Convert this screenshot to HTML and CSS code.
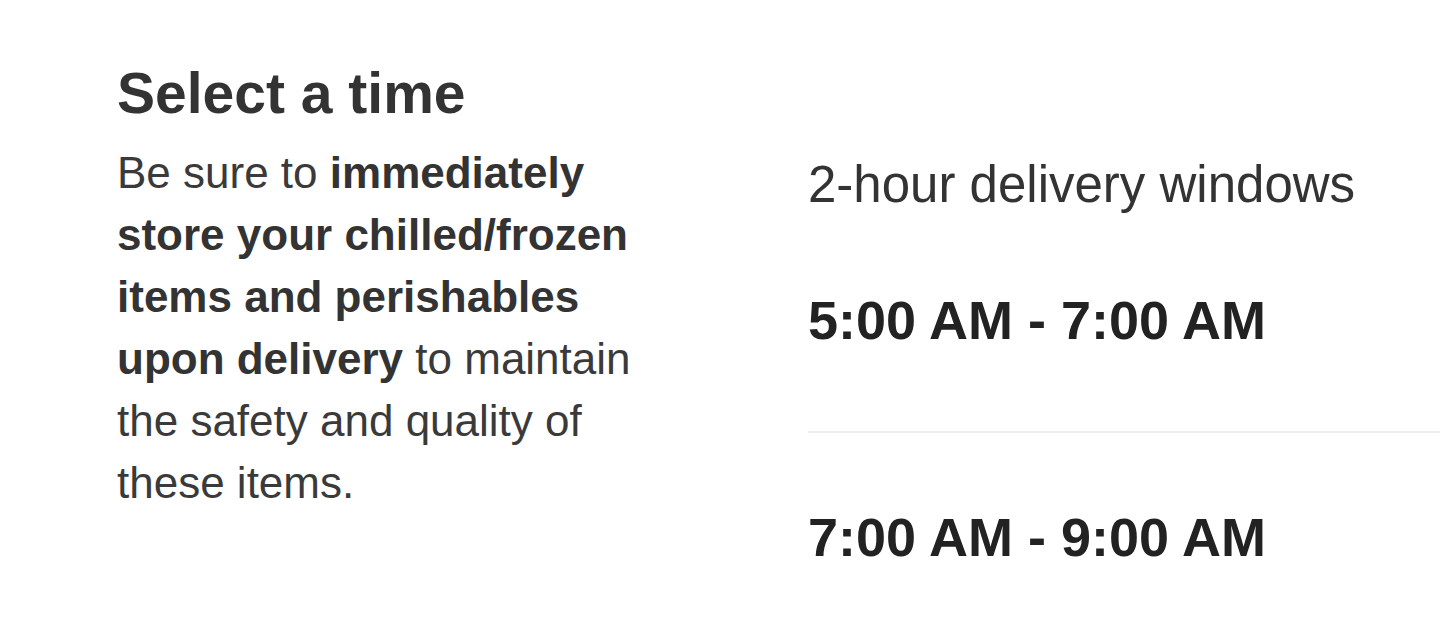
FILE: index.html
```html
<!DOCTYPE html>
<html lang="en">
<head>
<meta charset="utf-8">
<title>Select a time</title>
<link rel="stylesheet" href="styles.css">
</head>
<body>
<main class="page">
  <section class="intro">
    <h1 class="title">Select a time</h1>
    <p class="note">Be sure to <strong>immediately store your chilled/frozen items and perishables upon delivery</strong> to maintain the safety and quality of these items.</p>
  </section>
  <section class="slots">
    <h2 class="slots-title">2-hour delivery windows</h2>
    <ul class="slot-list">
      <li class="slot">5:00 AM - 7:00 AM</li>
      <li class="slot">7:00 AM - 9:00 AM</li>
    </ul>
  </section>
</main>
</body>
</html>
```
FILE: styles.css
```css
* { box-sizing: border-box; }
html, body { margin: 0; padding: 0; background: #fff; }
body {
  font-family: "Liberation Sans", Arial, sans-serif;
  color: #333;
  overflow: hidden;
}
.page {
  display: grid;
  grid-template-columns: 525px 1fr;
  column-gap: 166px;
  padding-left: 117px;
  width: 1440px;
}
.intro { padding-top: 59px; }
.title {
  margin: 0;
  font-size: 57px;
  line-height: 68px;
  font-weight: 700;
  color: #333;
}
.note {
  margin: 15px 0 0;
  font-size: 44px;
  line-height: 62px;
  color: #3a3a3a;
}
.note strong { font-weight: 700; color: #333; }
.slots { padding-top: 154px; }
.slots-title {
  margin: 0;
  font-size: 51px;
  line-height: 62px;
  font-weight: 400;
  color: #333;
}
.slot-list { list-style: none; margin: 0; padding: 0; }
.slot {
  padding: 72px 0 78px;
  font-size: 54px;
  line-height: 65px;
  font-weight: 700;
  color: #222;
  border-bottom: 2px solid #ededed;
}
```
